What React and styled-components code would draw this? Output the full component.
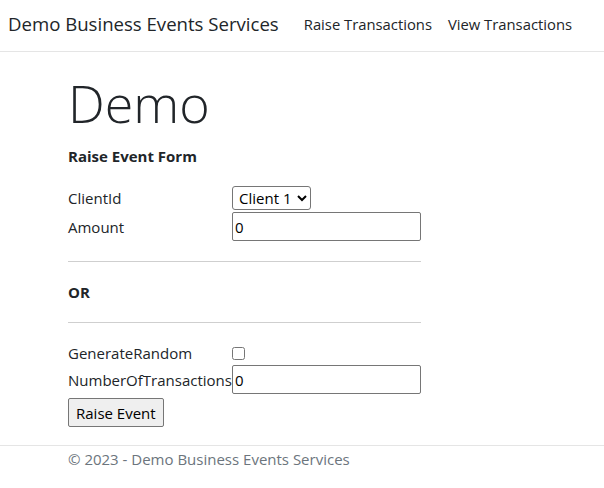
import React from 'react';
import styled, { createGlobalStyle } from 'styled-components';

const Global = createGlobalStyle`
  html, body { margin: 0; padding: 0; background: #fff; }
  body {
    font-family: "Open Sans", "Noto Sans", sans-serif;
    font-size: 15px;
    color: #212529;
  }
`;

const Nav = styled.header`
  display: flex;
  align-items: center;
  height: 52px;
  padding: 0 8px 4px;
  border-bottom: 1px solid #e5e5e5;
  box-sizing: border-box;
`;

const Brand = styled.a`
  font-size: 18.6px;
  color: #212529;
  margin-right: 17px;
  white-space: nowrap;
`;

const NavLink = styled.a`
  font-size: 14.8px;
  color: #212529;
  padding: 0 8px;
  white-space: nowrap;
`;

const Main = styled.main`
  padding: 0 0 0 68px;
  width: 353px;
`;

const Title = styled.h1`
  font-size: 52px;
  font-weight: 300;
  margin: 20px 0 12px;
  line-height: 1.2;
`;

const Heading = styled.h4`
  font-size: 15px;
  font-weight: 700;
  margin: 0 0 20px;
`;

const Form = styled.div`
  display: grid;
  grid-template-columns: 164px 189px;
  row-gap: 2px;
  align-items: center;
`;

const Label = styled.label`
  font-size: 15px;
  white-space: nowrap;
`;

const Select = styled.select`
  justify-self: start;
  font: inherit;
  font-size: 15px;
  height: 24px;
  padding: 0 2px;
  border: 1px solid #767676;
  border-radius: 3px;
  background: #fff;
  color: #000;
`;

const Input = styled.input`
  font: inherit;
  font-size: 15px;
  height: 29px;
  box-sizing: border-box;
  width: 189px;
  padding: 0 2px;
  border: 1px solid #767676;
  border-radius: 2px;
`;

const Check = styled.input`
  justify-self: start;
  margin: 0;
  width: 13px;
  height: 13px;
`;

const Rule = styled.hr`
  grid-column: 1 / -1;
  border: 0;
  border-top: 1px solid #cfcfcf;
  margin: 18px 0;
  width: 100%;
`;

const Or = styled.div`
  grid-column: 1 / -1;
  font-weight: 700;
  font-size: 15px;
`;

const Button = styled.button`
  grid-column: 1 / -1;
  justify-self: start;
  font: inherit;
  font-size: 15px;
  height: 29px;
  padding: 0 7px;
  background: #efefef;
  border: 1px solid #767676;
  border-radius: 2px;
  color: #000;
  margin-top: 2px;
`;

const Footer = styled.footer`
  margin-top: 18px;
  border-top: 1px solid #e5e5e5;
  padding: 3px 0 0 68px;
  color: #6c757d;
  font-size: 15px;
`;

export default function App() {
  return (
    <>
      <Global />
      <Nav>
        <Brand>Demo Business Events Services</Brand>
        <NavLink>Raise Transactions</NavLink>
        <NavLink>View Transactions</NavLink>
      </Nav>
      <Main>
        <Title>Demo</Title>
        <Heading>Raise Event Form</Heading>
        <Form>
          <Label>ClientId</Label>
          <Select defaultValue="1">
            <option value="1">Client 1</option>
          </Select>
          <Label>Amount</Label>
          <Input defaultValue="0" />
          <Rule />
          <Or>OR</Or>
          <Rule />
          <Label>GenerateRandom</Label>
          <Check type="checkbox" />
          <Label>NumberOfTransactions</Label>
          <Input defaultValue="0" />
          <Button>Raise Event</Button>
        </Form>
      </Main>
      <Footer>© 2023 - Demo Business Events Services</Footer>
    </>
  );
}
